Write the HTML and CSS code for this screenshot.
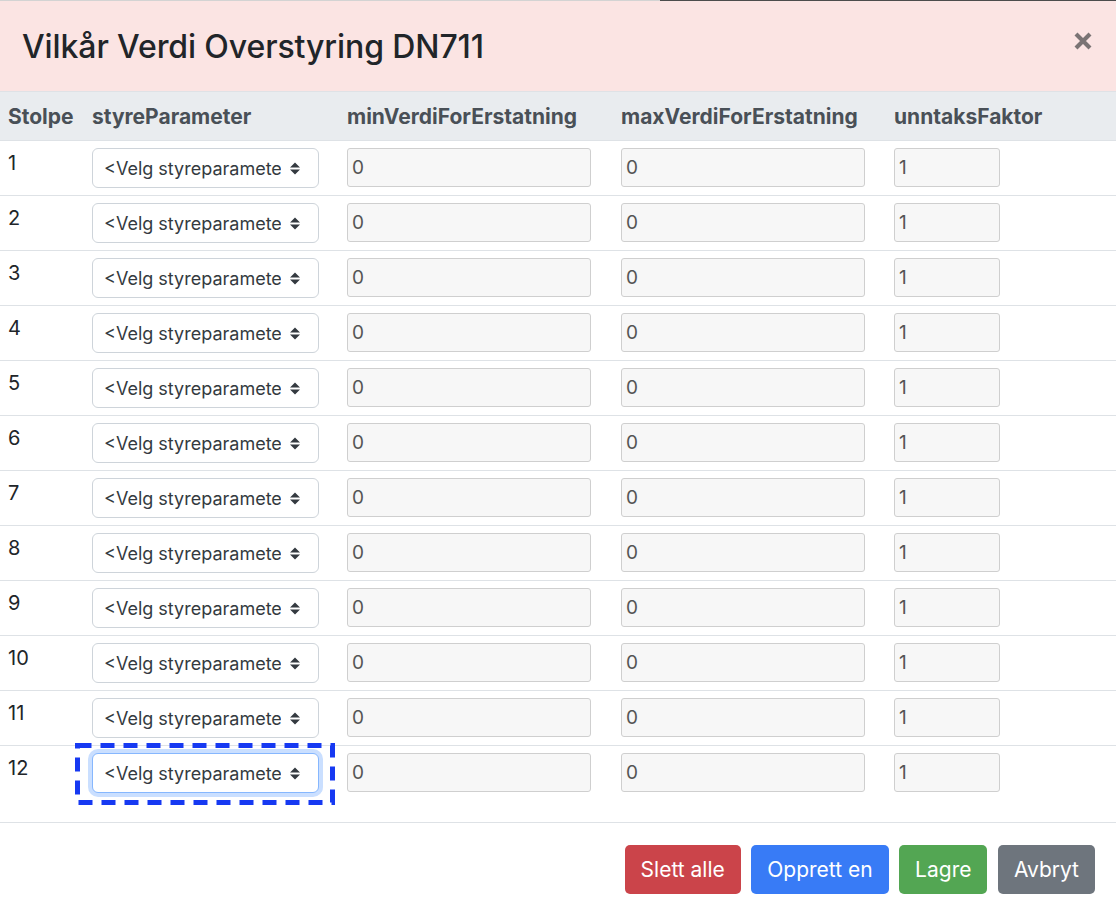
FILE: index.html
```html
<!DOCTYPE html>
<html lang="no">
<head>
<meta charset="utf-8">
<title>Vilkår Verdi Overstyring DN711</title>
<link rel="stylesheet" href="styles.css">
</head>
<body>
<div class="topline"><span class="tl-light"></span><span class="tl-dark"></span></div>
<div class="modal">
  <div class="modal-header">
    <h2 class="modal-title">Vilkår Verdi Overstyring DN711</h2>
    <button class="close" type="button" aria-label="Lukk">
      <svg width="18" height="18" viewBox="0 0 18 18"><path d="M2 2 L16 16 M16 2 L2 16" stroke="#7a7374" stroke-width="4.2" stroke-linecap="butt" fill="none"/></svg>
    </button>
  </div>
  <div class="modal-body">
    <table class="grid">
      <colgroup><col class="c1"><col class="c2"><col class="c3"><col class="c4"><col class="c5"></colgroup>
      <thead>
        <tr><th>Stolpe</th><th>styreParameter</th><th>minVerdiForErstatning</th><th>maxVerdiForErstatning</th><th>unntaksFaktor</th></tr>
      </thead>
      <tbody>
        <tr><td class="num">1</td><td><div class="sel-wrap"><select class="sel"><option>&lt;Velg styreparameter&gt;</option></select><svg class="arrow" width="10" height="13" viewBox="0 0 10 13"><path d="M0 5.4 L5 0.4 L10 5.4 Z M0 7.6 L10 7.6 L5 12.6 Z" fill="#343a40"/></svg></div></td><td><input class="inp" value="0"></td><td><input class="inp" value="0"></td><td><input class="inp small" value="1"></td></tr>
        <tr><td class="num">2</td><td><div class="sel-wrap"><select class="sel"><option>&lt;Velg styreparameter&gt;</option></select><svg class="arrow" width="10" height="13" viewBox="0 0 10 13"><path d="M0 5.4 L5 0.4 L10 5.4 Z M0 7.6 L10 7.6 L5 12.6 Z" fill="#343a40"/></svg></div></td><td><input class="inp" value="0"></td><td><input class="inp" value="0"></td><td><input class="inp small" value="1"></td></tr>
        <tr><td class="num">3</td><td><div class="sel-wrap"><select class="sel"><option>&lt;Velg styreparameter&gt;</option></select><svg class="arrow" width="10" height="13" viewBox="0 0 10 13"><path d="M0 5.4 L5 0.4 L10 5.4 Z M0 7.6 L10 7.6 L5 12.6 Z" fill="#343a40"/></svg></div></td><td><input class="inp" value="0"></td><td><input class="inp" value="0"></td><td><input class="inp small" value="1"></td></tr>
        <tr><td class="num">4</td><td><div class="sel-wrap"><select class="sel"><option>&lt;Velg styreparameter&gt;</option></select><svg class="arrow" width="10" height="13" viewBox="0 0 10 13"><path d="M0 5.4 L5 0.4 L10 5.4 Z M0 7.6 L10 7.6 L5 12.6 Z" fill="#343a40"/></svg></div></td><td><input class="inp" value="0"></td><td><input class="inp" value="0"></td><td><input class="inp small" value="1"></td></tr>
        <tr><td class="num">5</td><td><div class="sel-wrap"><select class="sel"><option>&lt;Velg styreparameter&gt;</option></select><svg class="arrow" width="10" height="13" viewBox="0 0 10 13"><path d="M0 5.4 L5 0.4 L10 5.4 Z M0 7.6 L10 7.6 L5 12.6 Z" fill="#343a40"/></svg></div></td><td><input class="inp" value="0"></td><td><input class="inp" value="0"></td><td><input class="inp small" value="1"></td></tr>
        <tr><td class="num">6</td><td><div class="sel-wrap"><select class="sel"><option>&lt;Velg styreparameter&gt;</option></select><svg class="arrow" width="10" height="13" viewBox="0 0 10 13"><path d="M0 5.4 L5 0.4 L10 5.4 Z M0 7.6 L10 7.6 L5 12.6 Z" fill="#343a40"/></svg></div></td><td><input class="inp" value="0"></td><td><input class="inp" value="0"></td><td><input class="inp small" value="1"></td></tr>
        <tr><td class="num">7</td><td><div class="sel-wrap"><select class="sel"><option>&lt;Velg styreparameter&gt;</option></select><svg class="arrow" width="10" height="13" viewBox="0 0 10 13"><path d="M0 5.4 L5 0.4 L10 5.4 Z M0 7.6 L10 7.6 L5 12.6 Z" fill="#343a40"/></svg></div></td><td><input class="inp" value="0"></td><td><input class="inp" value="0"></td><td><input class="inp small" value="1"></td></tr>
        <tr><td class="num">8</td><td><div class="sel-wrap"><select class="sel"><option>&lt;Velg styreparameter&gt;</option></select><svg class="arrow" width="10" height="13" viewBox="0 0 10 13"><path d="M0 5.4 L5 0.4 L10 5.4 Z M0 7.6 L10 7.6 L5 12.6 Z" fill="#343a40"/></svg></div></td><td><input class="inp" value="0"></td><td><input class="inp" value="0"></td><td><input class="inp small" value="1"></td></tr>
        <tr><td class="num">9</td><td><div class="sel-wrap"><select class="sel"><option>&lt;Velg styreparameter&gt;</option></select><svg class="arrow" width="10" height="13" viewBox="0 0 10 13"><path d="M0 5.4 L5 0.4 L10 5.4 Z M0 7.6 L10 7.6 L5 12.6 Z" fill="#343a40"/></svg></div></td><td><input class="inp" value="0"></td><td><input class="inp" value="0"></td><td><input class="inp small" value="1"></td></tr>
        <tr><td class="num">10</td><td><div class="sel-wrap"><select class="sel"><option>&lt;Velg styreparameter&gt;</option></select><svg class="arrow" width="10" height="13" viewBox="0 0 10 13"><path d="M0 5.4 L5 0.4 L10 5.4 Z M0 7.6 L10 7.6 L5 12.6 Z" fill="#343a40"/></svg></div></td><td><input class="inp" value="0"></td><td><input class="inp" value="0"></td><td><input class="inp small" value="1"></td></tr>
        <tr><td class="num">11</td><td><div class="sel-wrap"><select class="sel"><option>&lt;Velg styreparameter&gt;</option></select><svg class="arrow" width="10" height="13" viewBox="0 0 10 13"><path d="M0 5.4 L5 0.4 L10 5.4 Z M0 7.6 L10 7.6 L5 12.6 Z" fill="#343a40"/></svg></div></td><td><input class="inp" value="0"></td><td><input class="inp" value="0"></td><td><input class="inp small" value="1"></td></tr>
        <tr><td class="num">12</td><td><div class="sel-wrap"><select class="sel focused"><option>&lt;Velg styreparameter&gt;</option></select><svg class="arrow" width="10" height="13" viewBox="0 0 10 13"><path d="M0 5.4 L5 0.4 L10 5.4 Z M0 7.6 L10 7.6 L5 12.6 Z" fill="#343a40"/></svg><svg class="highlight" width="260" height="62" viewBox="0 0 260 62"><rect x="2.5" y="2.5" width="255" height="57" fill="none" stroke="#1639f2" stroke-width="5" stroke-dasharray="14 9"/></svg></div></td><td><input class="inp" value="0"></td><td><input class="inp" value="0"></td><td><input class="inp small" value="1"></td></tr>
      </tbody>
    </table>
  </div>
  <div class="modal-footer">
    <button class="btn btn-red" type="button">Slett alle</button>
    <button class="btn btn-blue" type="button">Opprett en</button>
    <button class="btn btn-green" type="button">Lagre</button>
    <button class="btn btn-grey" type="button">Avbryt</button>
  </div>
</div>
</body>
</html>
```

FILE: styles.css
```css
html, body {
  margin: 0;
  padding: 0;
  background: #ffffff;
}
body {
  font-family: Inter, "Liberation Sans", Arial, sans-serif;
  color: #212529;
}
.topline {
  display: flex;
  height: 1px;
}
.tl-light {
  width: 660px;
  background: #d3d3d3;
}
.tl-dark {
  flex: 1;
  background: #4c4c4c;
}
.modal {
  background: #ffffff;
}
.modal-header {
  display: flex;
  align-items: center;
  justify-content: space-between;
  height: 91px;
  box-sizing: border-box;
  padding: 0 22px 0 22px;
  background: #fbe4e3;
  border-bottom: 1px solid #dfe2e6;
}
.modal-title {
  margin: 0 0 0 0;
  font-size: 32px;
  font-weight: 500;
  letter-spacing: -0.1px;
  color: #212529;
  line-height: 1.2;
  padding-top: 2px;
}
.close {
  border: 0;
  background: none;
  padding: 0;
  margin: 0 2px 10px 0;
  width: 18px;
  height: 18px;
  display: flex;
}
.modal-body {
  padding: 0 0 22px 0;
}
.grid {
  width: 100%;
  border-collapse: collapse;
  table-layout: fixed;
}
.c1 { width: 84px; }
.c2 { width: 255px; }
.c3 { width: 274px; }
.c4 { width: 273px; }
.grid th {
  background: #e9ecef;
  color: #495057;
  font-size: 21px;
  font-weight: 700;
  text-align: left;
  padding: 10px 8px 8px 8px;
  line-height: 30px;
  white-space: nowrap;
}
.grid td {
  border-top: 1px solid #dee2e6;
  padding: 7px 8px 7px 8px;
  vertical-align: top;
}
.num {
  font-size: 20px;
  line-height: 30px;
  color: #212529;
}
.sel-wrap {
  position: relative;
  width: 227px;
  height: 40px;
}
.sel {
  appearance: none;
  -webkit-appearance: none;
  width: 227px;
  height: 40px;
  box-sizing: border-box;
  border: 1px solid #ced4da;
  border-radius: 6px;
  background: #ffffff;
  padding: 0 37px 0 11px;
  font-family: Inter, "Liberation Sans", Arial, sans-serif;
  font-size: 18px;
  color: #343a40;
  outline: none;
}
.sel.focused {
  border-color: #86b7fe;
  box-shadow: 0 0 0 4px rgba(13, 110, 253, 0.22);
}
.arrow {
  position: absolute;
  left: 198px;
  top: 14px;
  pointer-events: none;
}
.highlight {
  position: absolute;
  left: -17px;
  top: -10px;
  pointer-events: none;
}
.inp {
  width: 244px;
  height: 39px;
  box-sizing: border-box;
  border: 1px solid #cfcfcf;
  border-radius: 3px;
  background: #f7f7f7;
  padding: 0 4px;
  font-family: Inter, "Liberation Sans", Arial, sans-serif;
  font-size: 19px;
  color: #555555;
  outline: none;
}
.inp.small {
  width: 106px;
}
.modal-footer {
  display: flex;
  justify-content: flex-end;
  gap: 10.5px;
  border-top: 1px solid #dee2e6;
  padding: 22px 21px 22px 21px;
}
.btn {
  height: 49px;
  border: 0;
  border-radius: 5px;
  padding: 0 16px;
  font-family: Inter, "Liberation Sans", Arial, sans-serif;
  font-size: 21px;
  color: #ffffff;
}
.btn-red { background: #cb444a; }
.btn-blue { background: #387bf6; }
.btn-green { background: #53a653; }
.btn-grey { background: #6e757d; }
```
